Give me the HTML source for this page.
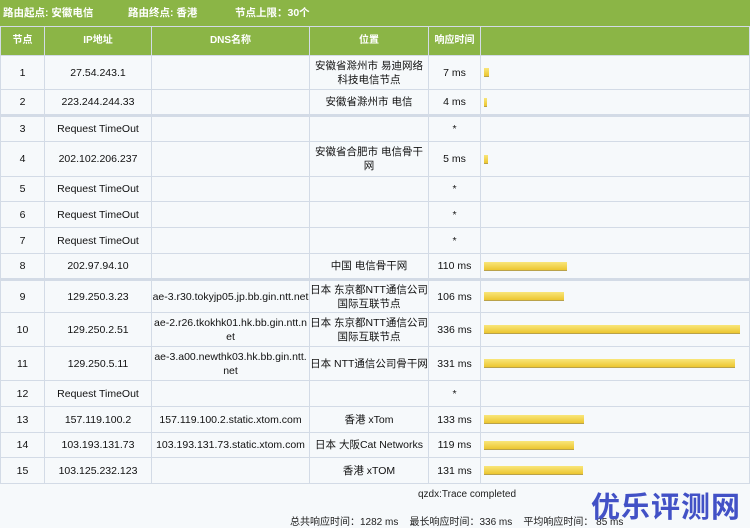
<!DOCTYPE html>
<html><head><meta charset="utf-8"><style>
*{margin:0;padding:0;box-sizing:border-box}
body{width:750px;height:528px;background:#f6f9fb;font-family:"Liberation Sans","Noto Sans CJK SC",sans-serif;font-size:10.5px;color:#111;position:relative;overflow:hidden}
.top{position:absolute;left:0;top:0;width:750px;height:27px;background:#8bb546;color:#fff;font-weight:bold;font-size:10.5px;line-height:27px}
.top span{position:absolute;top:0}
table{position:absolute;left:0;top:26px;border-collapse:collapse;table-layout:fixed;width:750px}
td,th{border:1px solid #d3dbe6;text-align:center;vertical-align:middle;font-weight:normal;line-height:14px;overflow:hidden;word-break:break-all}
th{background:#8bb546;color:#fff;font-weight:bold;height:29px;font-size:10px}
.bar{height:9px;background:linear-gradient(#f9e67a,#ecc630);border-bottom:1px solid #b9a24a;margin-left:3px}
td.b{text-align:left}
tr.t td{border-top:3px solid #d3dbe6}
.f{position:absolute;font-size:10px;color:#222}
.logo{position:absolute;left:591px;top:484px;font-size:29px;font-weight:bold;color:#4251c6;font-family:"Noto Sans CJK SC",sans-serif;letter-spacing:1px}
</style></head><body>
<div class="top"><span style="left:3px">路由起点: 安徽电信</span><span style="left:128px">路由终点: 香港</span><span style="left:235px">节点上限：30个</span></div>
<table>
<colgroup><col style="width:44px"><col style="width:107px"><col style="width:158px"><col style="width:119px"><col style="width:52px"><col></colgroup>
<tr><th>节点</th><th>IP地址</th><th>DNS名称</th><th>位置</th><th>响应时间</th><th></th></tr>
<tr style="height:34px"><td>1</td><td>27.54.243.1</td><td></td><td>安徽省滁州市 易迪网络科技电信节点</td><td>7 ms</td><td class="b"><div class="bar" style="width:5px"></div></td></tr>
<tr style="height:26px"><td>2</td><td>223.244.244.33</td><td></td><td>安徽省滁州市 电信</td><td>4 ms</td><td class="b"><div class="bar" style="width:3px"></div></td></tr>
<tr class="t" style="height:26px"><td>3</td><td>Request TimeOut</td><td></td><td></td><td>*</td><td></td></tr>
<tr style="height:35px"><td>4</td><td>202.102.206.237</td><td></td><td>安徽省合肥市 电信骨干网</td><td>5 ms</td><td class="b"><div class="bar" style="width:4px"></div></td></tr>
<tr style="height:25px"><td>5</td><td>Request TimeOut</td><td></td><td></td><td>*</td><td></td></tr>
<tr style="height:26px"><td>6</td><td>Request TimeOut</td><td></td><td></td><td>*</td><td></td></tr>
<tr style="height:26px"><td>7</td><td>Request TimeOut</td><td></td><td></td><td>*</td><td></td></tr>
<tr style="height:26px"><td>8</td><td>202.97.94.10</td><td></td><td>中国 电信骨干网</td><td>110 ms</td><td class="b"><div class="bar" style="width:83px"></div></td></tr>
<tr class="t" style="height:33px"><td>9</td><td>129.250.3.23</td><td>ae-3.r30.tokyjp05.jp.bb.gin.ntt.net</td><td>日本 东京都NTT通信公司国际互联节点</td><td>106 ms</td><td class="b"><div class="bar" style="width:80px"></div></td></tr>
<tr style="height:34px"><td>10</td><td>129.250.2.51</td><td>ae-2.r26.tkokhk01.hk.bb.gin.ntt.net</td><td>日本 东京都NTT通信公司国际互联节点</td><td>336 ms</td><td class="b"><div class="bar" style="width:256px"></div></td></tr>
<tr style="height:34px"><td>11</td><td>129.250.5.11</td><td>ae-3.a00.newthk03.hk.bb.gin.ntt.net</td><td>日本 NTT通信公司骨干网</td><td>331 ms</td><td class="b"><div class="bar" style="width:251px"></div></td></tr>
<tr style="height:26px"><td>12</td><td>Request TimeOut</td><td></td><td></td><td>*</td><td></td></tr>
<tr style="height:26px"><td>13</td><td>157.119.100.2</td><td>157.119.100.2.static.xtom.com</td><td>香港 xTom</td><td>133 ms</td><td class="b"><div class="bar" style="width:100px"></div></td></tr>
<tr style="height:25px"><td>14</td><td>103.193.131.73</td><td>103.193.131.73.static.xtom.com</td><td>日本 大阪Cat Networks</td><td>119 ms</td><td class="b"><div class="bar" style="width:90px"></div></td></tr>
<tr style="height:26px"><td>15</td><td>103.125.232.123</td><td></td><td>香港 xTOM</td><td>131 ms</td><td class="b"><div class="bar" style="width:99px"></div></td></tr>
</table>
<div class="f" style="left:418px;top:489px">qzdx:Trace completed</div>
<div class="f" style="left:290px;top:513px">总共响应时间：1282 ms &nbsp;&nbsp; 最长响应时间：336 ms &nbsp;&nbsp; 平均响应时间： 85 ms</div>
<div class="logo">优乐评测网</div>
</body></html>
